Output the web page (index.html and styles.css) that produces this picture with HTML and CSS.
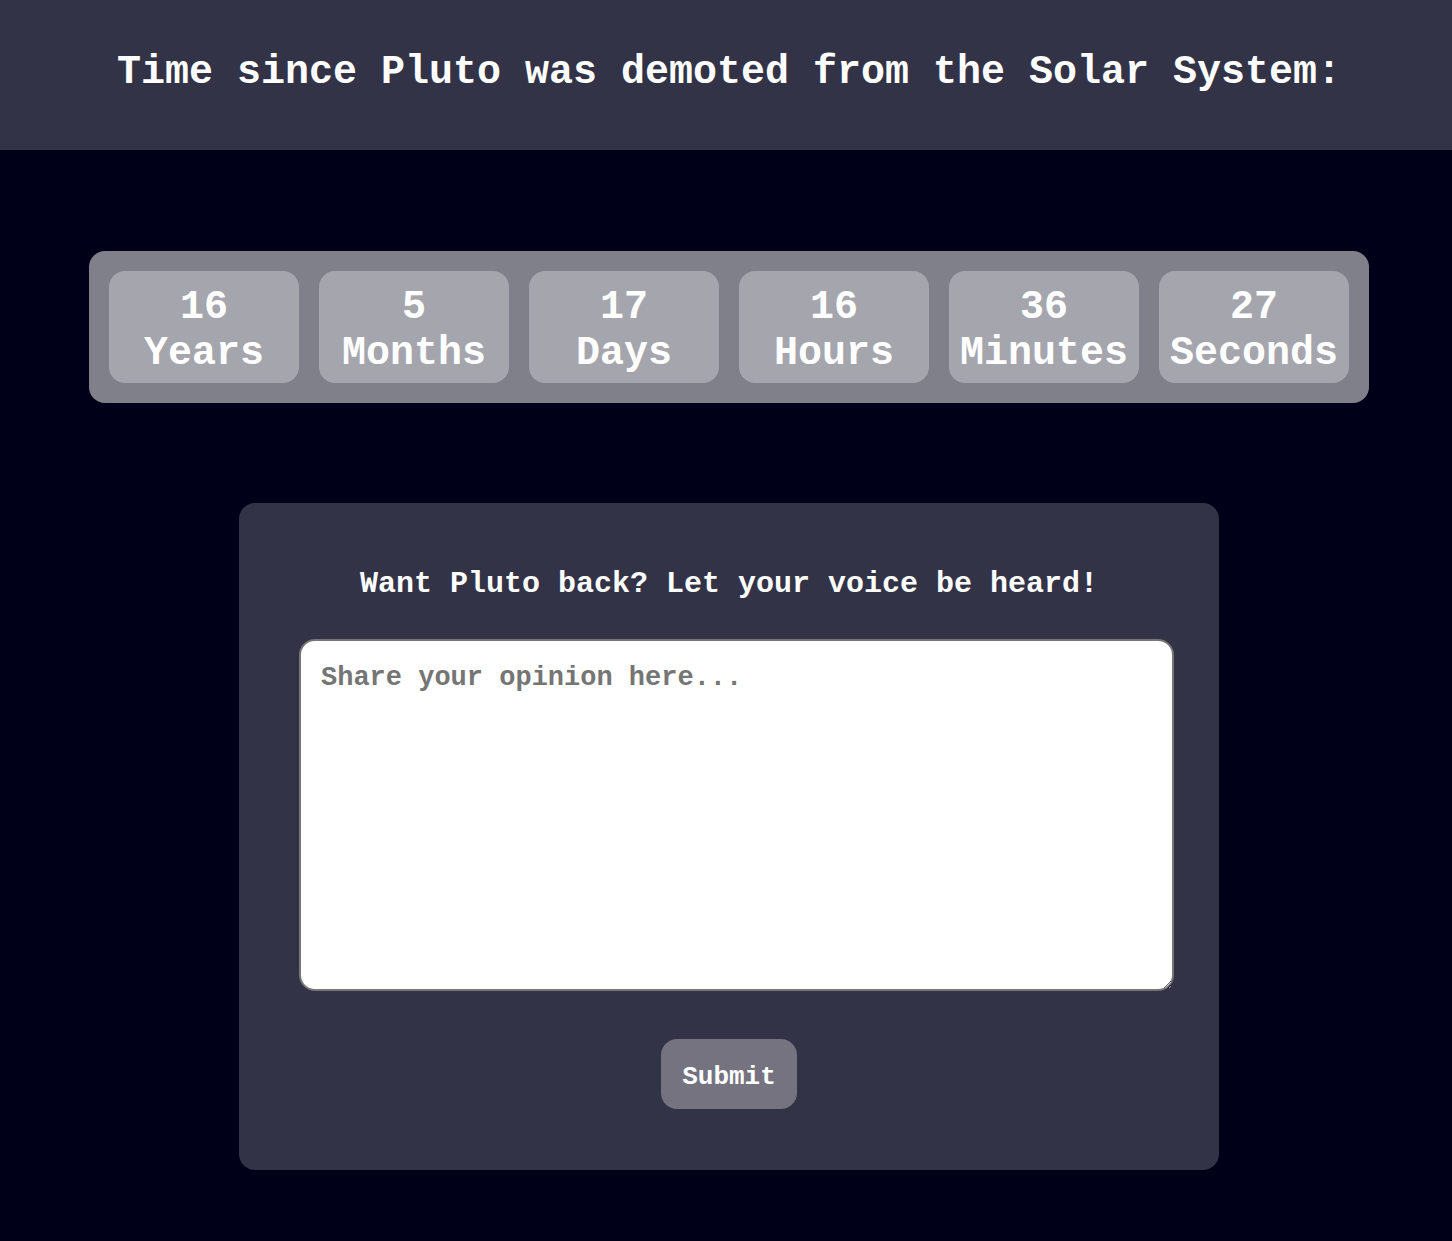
FILE: index.html
```html
<!DOCTYPE html>
<html>
<head>
<meta charset="utf-8">
<link rel="stylesheet" href="styles.css">
</head>
<body>
<div class="page">
  <header class="top">
    <h1 class="title">Time since Pluto was demoted from the Solar System:</h1>
  </header>
  <main class="main">
    <section class="counter">
      <div class="unit">16<br>Years</div>
      <div class="unit">5<br>Months</div>
      <div class="unit">17<br>Days</div>
      <div class="unit">16<br>Hours</div>
      <div class="unit">36<br>Minutes</div>
      <div class="unit">27<br>Seconds</div>
    </section>
    <section class="card">
      <h2 class="card-title">Want Pluto back? Let your voice be heard!</h2>
      <textarea class="opinion" placeholder="Share your opinion here..."></textarea>
      <button class="submit">Submit</button>
    </section>
  </main>
</div>
</body>
</html>
```
FILE: styles.css
```css
html, body {
  margin: 0;
  padding: 0;
  background: #000018;
}
body {
  font-family: "Liberation Mono", "Courier New", monospace;
  font-weight: bold;
  color: #ffffff;
}
.page {
  padding-left: 6px;
  min-height: 1241px;
  box-sizing: border-box;
}
.top {
  background: #333347;
  height: 150px;
  box-sizing: border-box;
  padding-top: 50px;
  margin-left: -6px;
  padding-left: 6px;
}
.title {
  margin: 0;
  font-size: 40px;
  font-weight: bold;
  text-align: center;
  line-height: normal;
}
.main {
  display: flex;
  flex-direction: column;
  align-items: center;
  padding-top: 101px;
}
.counter {
  width: 1280px;
  box-sizing: border-box;
  padding: 20px;
  background: #80808a;
  border-radius: 16px;
  display: flex;
  gap: 20px;
}
.unit {
  flex: 1;
  background: #a5a5ad;
  border-radius: 16px;
  padding: 14px 0 6px;
  text-align: center;
  font-size: 40px;
  line-height: 46px;
}
.card {
  margin-top: 100px;
  width: 980px;
  box-sizing: border-box;
  background: #333347;
  border-radius: 16px;
  padding: 64px 60px 61px;
  display: flex;
  flex-direction: column;
  align-items: center;
}
.card-title {
  margin: 0 0 38px 0;
  font-size: 30px;
  font-weight: bold;
  line-height: 34px;
  text-align: center;
}
.opinion {
  align-self: flex-start;
  width: 875px;
  height: 352px;
  box-sizing: border-box;
  border: 2px solid #767676;
  border-radius: 16px;
  padding: 22px 20px 18px;
  font-family: "Liberation Mono", "Courier New", monospace;
  font-weight: bold;
  font-size: 27px;
  color: #222;
  background: #fff;
  margin: 0;
  display: block;
}
.opinion::placeholder {
  color: #757575;
}
.submit {
  margin-top: 48px;
  background: #74737f;
  color: #fff;
  border: none;
  border-radius: 16px;
  padding: 23px 21px 17px;
  height: 70px;
  box-sizing: border-box;
  font-family: "Liberation Mono", "Courier New", monospace;
  font-weight: bold;
  font-size: 26px;
  line-height: 30px;
}
```
